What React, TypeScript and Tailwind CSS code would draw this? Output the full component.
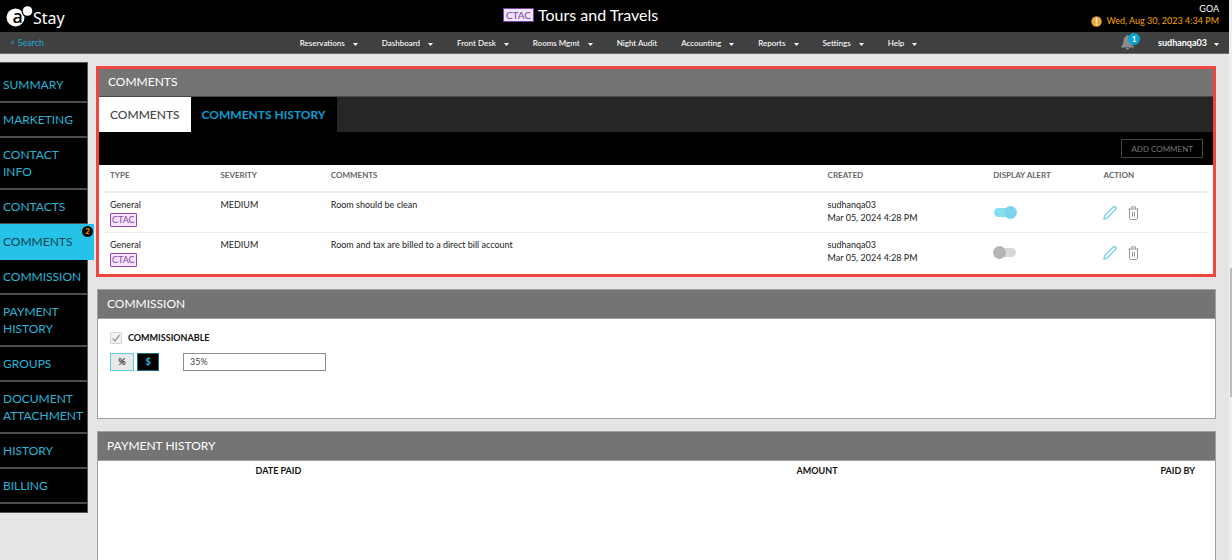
import React from "react";

const navItems: { label: string; menu: boolean }[] = [
  { label: "Reservations", menu: true },
  { label: "Dashboard", menu: true },
  { label: "Front Desk", menu: true },
  { label: "Rooms Mgmt", menu: true },
  { label: "Night Audit", menu: false },
  { label: "Accounting", menu: true },
  { label: "Reports", menu: true },
  { label: "Settings", menu: true },
  { label: "Help", menu: true },
];

const sections = [
  "Summary",
  "Marketing",
  "Contact Info",
  "Contacts",
  "Comments",
  "Commission",
  "Payment History",
  "Groups",
  "Document Attachment",
  "History",
  "Billing",
];

const comments = [
  { text: "Room should be clean", alert: true },
  { text: "Room and tax are billed to a direct bill account", alert: false },
];

function Caret() {
  return (
    <svg width="5" height="3" viewBox="0 0 5 3" className="mt-1 shrink-0" aria-hidden="true">
      <path d="M0 0h5L2.5 3z" fill="currentColor" />
    </svg>
  );
}

function Logo() {
  return (
    <svg width="27" height="26" viewBox="0 0 27 26" aria-hidden="true">
      <circle cx="9.5" cy="14.5" r="9" fill="#fff" />
      <text x="6.5" y="19.5" fontSize="18" fontWeight="500" fontFamily="Noto Sans, sans-serif" fill="#000">
        a
      </text>
      <circle cx="21.5" cy="8" r="6" fill="#000" />
      <circle cx="21.5" cy="8" r="4.8" fill="#fff" />
    </svg>
  );
}

function BellIcon() {
  return (
    <svg width="13" height="15" viewBox="0 0 13 15" fill="currentColor" aria-hidden="true">
      <path d="M6.5 0c.7 0 1.1.5 1.1 1.2 2 .5 2.9 2.1 2.9 4.3 0 3 .8 4.7 2.5 6v.9H0v-.9c1.7-1.3 2.5-3 2.5-6 0-2.2.9-3.800 2.900-4.300C5.400.5 5.800 0 6.500 0zM4.900 13.100h3.200c0 1-.7 1.700-1.600 1.700s-1.600-.7-1.600-1.700z" />
    </svg>
  );
}

function Header() {
  return (
    <header>
      <div className="flex h-8 items-center bg-black text-white">
        <div className="flex flex-1 items-center pl-1.5">
          <Logo />
          <span className="pt-1 font-['Noto_Sans',sans-serif] text-[16px] leading-5">Stay</span>
        </div>
        <h1 className="flex items-center gap-1 pr-16 pb-0.5 text-[16px] leading-5">
          <span className="border border-[#7b3fb5] bg-[#efe6f8] px-0.5 text-[10px] leading-3 text-[#7b3fb5]">
            CTAC
          </span>
          Tours and Travels
        </h1>
        <div className="flex flex-1 flex-col items-end pr-2.5 pb-0.5 text-[9px] leading-3">
          <span>GOA</span>
          <span className="flex items-center gap-1 text-[#f5a10a]">
            <svg width="11" height="11" viewBox="0 0 11 11" aria-hidden="true">
              <circle cx="5.5" cy="5.5" r="5.2" fill="#f0a73a" />
              <path d="M5.5 2v4.4M5.5 7.6v1.4" stroke="#fff" strokeWidth="1.4" />
            </svg>
            Wed, Aug 30, 2023 4:34 PM
          </span>
        </div>
      </div>
      <div className="flex h-[22px] items-center border-b border-[#6b6b6b] bg-[#404040] text-[9px] text-white">
        <div className="flex-1 pl-2.5">
          <a href="#search" className="text-[#1fa6d0]">
            &lt; Search
          </a>
        </div>
        <nav className="flex items-center pl-3 text-[8px] font-medium" aria-label="Main">
          {navItems.map((item) => (
            <button key={item.label} type="button" className="flex items-center gap-2 pr-6">
              {item.label}
              {item.menu && <Caret />}
            </button>
          ))}
        </nav>
        <div className="flex flex-1 items-center justify-end gap-4 pr-2.5">
          <button type="button" className="relative mr-2 text-[#8c8c8c]" aria-label="Notifications">
            <BellIcon />
            <span className="absolute -top-0.5 left-[7px] flex size-3 items-center justify-center rounded-full bg-[#0aa5cf] text-[8px] font-bold text-white">
              1
            </span>
          </button>
          <button type="button" className="flex items-center gap-[7px] text-[9px] font-bold">
            sudhanqa03
            <Caret />
          </button>
        </div>
      </div>
    </header>
  );
}

function Sidebar() {
  return (
    <nav
      className="w-[88px] shrink-0 border-t border-r border-b border-[#555] bg-black pt-[5px] pb-2 text-[12px] leading-[17px] text-[#29b4d6] uppercase"
      aria-label="Sections"
    >
      {sections.map((name) =>
        name === "Comments" ? (
          <a
            key={name}
            href="#comments"
            className="relative -mt-px -mr-[7px] block bg-[#27c2e8] pt-[9px] pb-2.5 pl-[3px] text-[#0c4454]"
          >
            {name}
            <span className="absolute top-0.5 right-px flex size-[11px] items-center justify-center rounded-full bg-black text-[8px] font-bold text-[#f5a10a]">
              2
            </span>
          </a>
        ) : (
          <a key={name} href="#section" className="block border-b-2 border-[#4d4d4d] py-2 pl-[3px]">
            {name}
          </a>
        ),
      )}
    </nav>
  );
}

function PencilIcon() {
  return (
    <svg width="14" height="14" viewBox="0 0 14 14" fill="none" stroke="#5fcbe8" strokeWidth="1.1" aria-hidden="true">
      <path d="M.8 13.2l.9-3.6L10 1.300c.8-.8 1.900-.8 2.500-.2.7.7.7 1.800-.1 2.600L4.300 12.100z" strokeLinejoin="round" />
    </svg>
  );
}

function TrashIcon() {
  return (
    <svg width="11" height="14" viewBox="0 0 11 14" fill="none" stroke="#999" aria-hidden="true">
      <path d="M.3 3h10.4M3.5 3V.9h4V3M1.5 3v9.2c0 .8.4 1.300 1.200 1.300h5.600c.8 0 1.200-.5 1.200-1.300V3M4.500 6v4.500M6.500 6v4.500" />
    </svg>
  );
}

function Comments() {
  return (
    <section className="border-3 border-[#ee4740] bg-white">
      <h2 className="border-b border-[#4a4a4a] bg-[#747474] px-[9px] pt-1 pb-1.5 text-[12px] leading-[17px] text-white">
        COMMENTS
      </h2>
      <div className="flex bg-[#262626] text-[12px] leading-[17px]" role="tablist">
        <button
          type="button"
          role="tab"
          aria-selected="true"
          className="bg-white px-[11px] py-[9px] font-medium text-[#444]"
        >
          COMMENTS
        </button>
        <button
          type="button"
          role="tab"
          aria-selected="false"
          className="bg-black px-[11px] py-[9px] font-bold text-[#0a9fd0]"
        >
          COMMENTS HISTORY
        </button>
      </div>
      <div className="flex justify-end bg-black px-2.5 py-[7px]">
        <button type="button" className="h-[19px] border border-[#444] px-[9px] text-[8px] text-[#777]">
          ADD COMMENT
        </button>
      </div>
      <div className="px-[5px] pb-0.5">
        <table className="w-full table-fixed text-left text-[9px] leading-[13px] text-[#222]">
          <thead>
            <tr className="border-b-2 border-[#ececec] text-[8px] text-[#666]">
              <th className="w-[10%] pt-1 pb-[9px] pl-1.5 font-bold">TYPE</th>
              <th className="w-[10%] pt-1 pb-[9px] pl-1.5 font-bold">SEVERITY</th>
              <th className="w-[45%] pt-1 pb-[9px] pl-1.5 font-bold">COMMENTS</th>
              <th className="w-[15%] pt-1 pb-[9px] pl-1.5 font-bold">CREATED</th>
              <th className="w-[10%] pt-1 pb-[9px] pl-1.5 font-bold">DISPLAY ALERT</th>
              <th className="w-[10%] pt-1 pb-[9px] pl-1.5 font-bold">ACTION</th>
            </tr>
          </thead>
          <tbody>
            {comments.map((row) => (
              <tr key={row.text} className="border-b border-[#ececec] align-top last:border-0">
                <td className="py-[5px] pl-1.5">
                  <div>General</div>
                  <span className="mt-0.5 block w-fit rounded-[1px] border border-[#9a3fb5] bg-[#f3e6f9] px-px text-[9px] leading-3 text-[#8a3fb0]">
                    CTAC
                  </span>
                </td>
                <td className="py-[5px] pl-1.5">MEDIUM</td>
                <td className="py-[5px] pl-1.5">{row.text}</td>
                <td className="py-[5px] pl-1.5">
                  sudhanqa03
                  <br />
                  Mar 05, 2024 4:28 PM
                </td>
                <td className="pl-[7px] align-middle">
                  <input
                    type="checkbox"
                    role="switch"
                    aria-label="Display alert"
                    defaultChecked={row.alert}
                    className="relative block h-[9px] w-[22px] appearance-none rounded-full bg-[#d8d8d8] before:absolute before:-top-0.5 before:-left-px before:size-[13px] before:rounded-full before:bg-[#b5b5b5] checked:bg-[#85dff3] checked:before:left-2.5 checked:before:bg-[#7dd3ea]"
                  />
                </td>
                <td className="pl-[5px] align-middle">
                  <div className="flex items-center gap-[11px]">
                    <button type="button" aria-label="Edit">
                      <PencilIcon />
                    </button>
                    <button type="button" aria-label="Delete">
                      <TrashIcon />
                    </button>
                  </div>
                </td>
              </tr>
            ))}
          </tbody>
        </table>
      </div>
    </section>
  );
}

function Card({ title, children }: { title: string; children: React.ReactNode }) {
  return (
    <section className="ml-px min-h-[130px] border border-[#a0a0a0] bg-white">
      <h2 className="border-b border-[#a0a0a0] bg-[#747474] px-[9px] pt-[5px] pb-1.5 text-[12px] leading-[17px] text-white">
        {title}
      </h2>
      {children}
    </section>
  );
}

function Commission() {
  return (
    <Card title="COMMISSION">
      <div className="flex flex-col gap-2 px-3 pt-3">
        <label className="flex items-center gap-1.5 text-[9px] leading-[14px] font-bold text-[#111]">
          <span className="relative size-3">
            <input
              type="checkbox"
              defaultChecked
              disabled
              className="block size-3 appearance-none border border-[#d4d4d4] bg-[#f2f2f2]"
            />
            <svg width="12" height="12" viewBox="0 0 12 12" fill="none" className="absolute inset-0" aria-hidden="true">
              <path d="M2.5 6.5L5 9l4.5-6" stroke="#999" strokeWidth="1.3" />
            </svg>
          </span>
          COMMISSIONABLE
        </label>
        <div className="flex h-[18px] text-[9px] font-bold">
          <button type="button" className="w-6 border border-[#5fcbe8] bg-[#e8e8e8] text-[#333]">
            %
          </button>
          <button type="button" className="ml-[3px] w-[22px] border border-[#1a6f85] bg-black text-[#29c0e6]">
            $
          </button>
          <input
            aria-label="Commission rate"
            defaultValue="35%"
            className="ml-6 w-[143px] border border-[#8c8c8c] px-1.5 font-normal text-[#444]"
          />
        </div>
      </div>
    </Card>
  );
}

function PaymentHistory() {
  return (
    <Card title="PAYMENT HISTORY">
      <table className="w-full table-fixed text-right text-[9px] leading-[14px] text-[#111]">
        <thead>
          <tr>
            <th className="w-[20%] py-[3px] pr-5 font-bold">DATE PAID</th>
            <th className="w-[48%] py-[3px] pr-5 font-bold">AMOUNT</th>
            <th className="w-[32%] py-[3px] pr-5 font-bold">PAID BY</th>
          </tr>
        </thead>
      </table>
    </Card>
  );
}

export default function App() {
  return (
    <div className="flex min-h-screen bg-[#e5e5e5] font-[Lato,sans-serif]">
      <div className="min-w-0 flex-1">
        <Header />
        <div className="flex items-start pt-2">
          <Sidebar />
          <main className="flex min-w-0 flex-1 flex-col gap-3 pt-1 pr-[13px] pl-2">
            <Comments />
            <Commission />
            <PaymentHistory />
          </main>
        </div>
      </div>
      <div className="w-[3px] bg-[#f0f0f0] pt-[268px]" aria-hidden="true">
        <div className="ml-px h-[129px] bg-[#bdbdbd]" />
      </div>
    </div>
  );
}
